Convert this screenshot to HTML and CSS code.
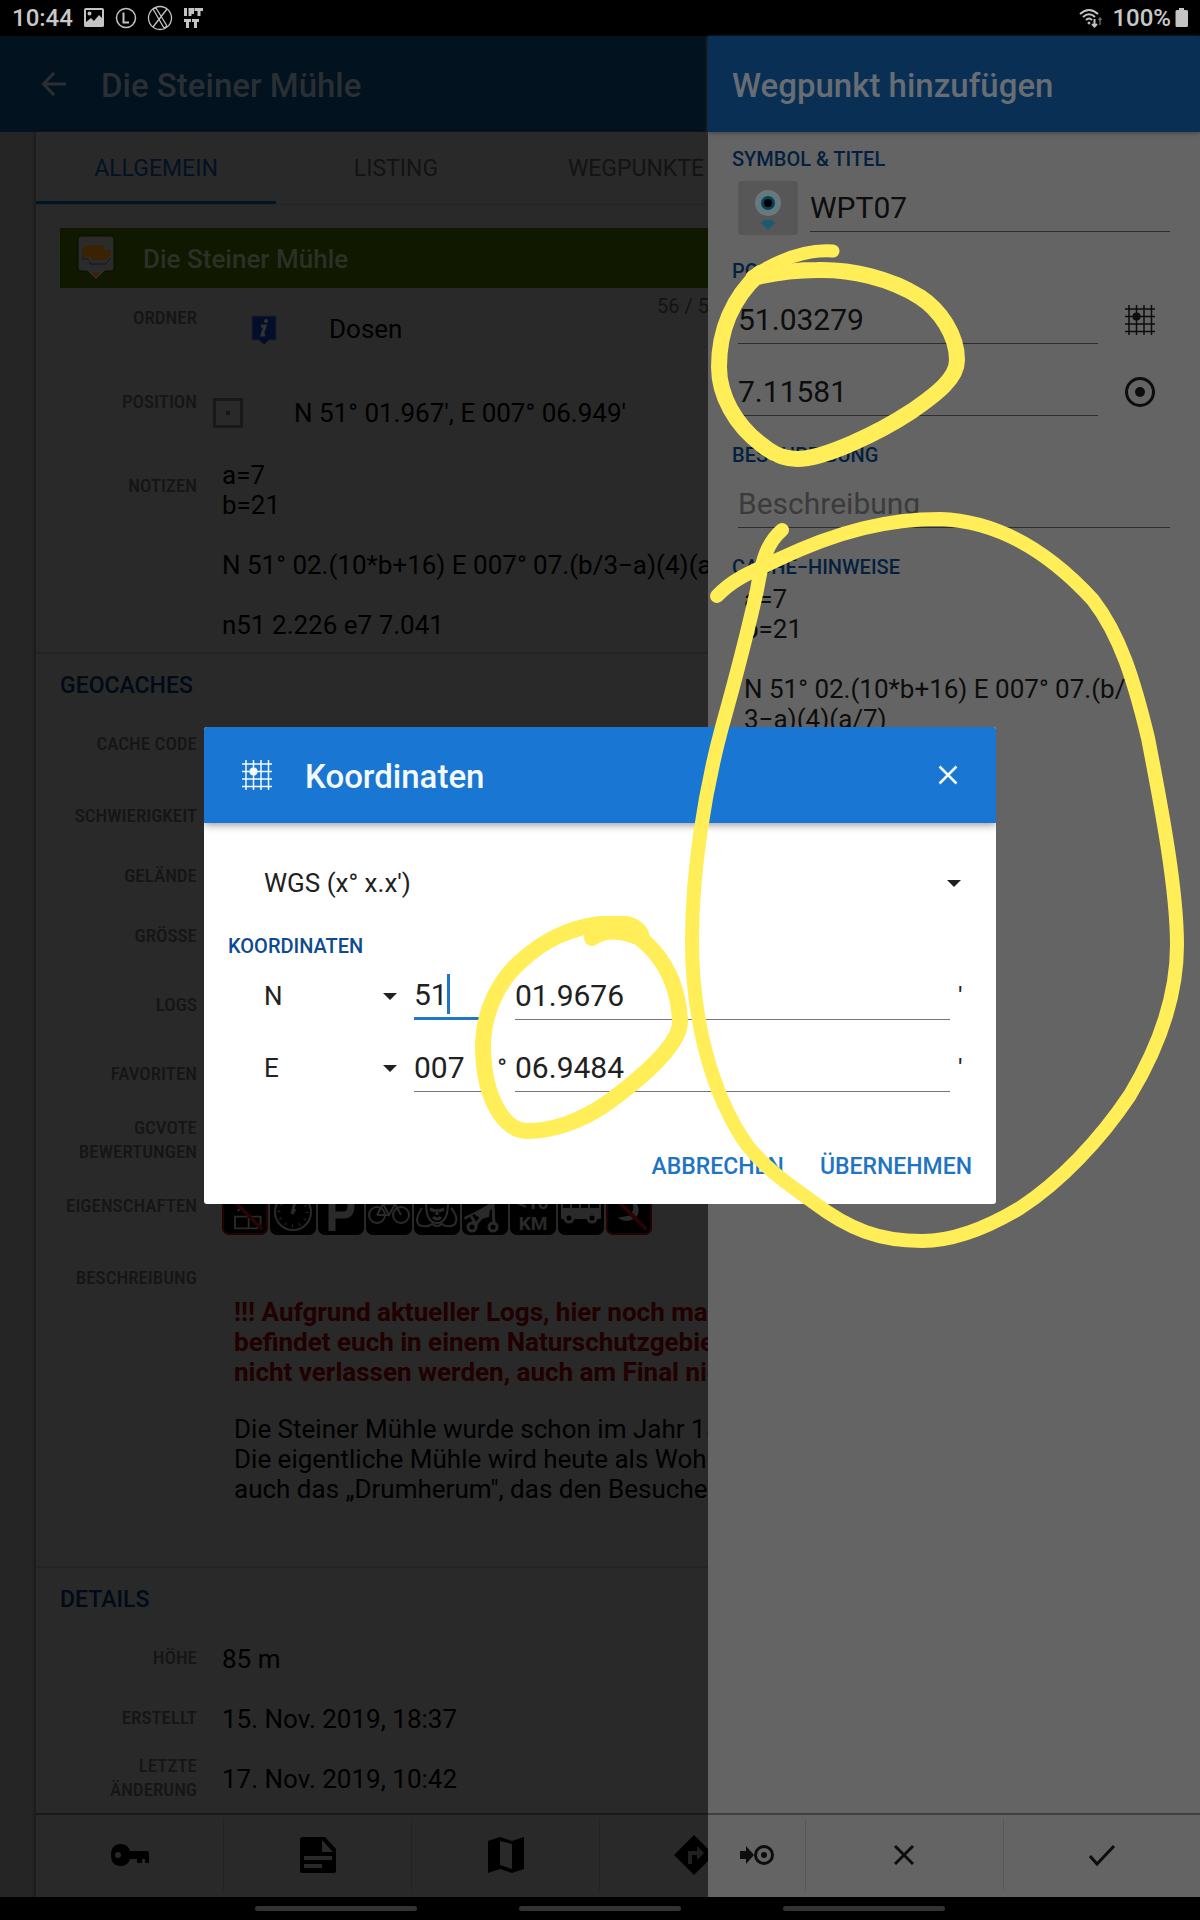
FILE: index.html
```html
<!DOCTYPE html>
<html lang="de">
<head>
<meta charset="utf-8">
<meta name="viewport" content="width=device-width, initial-scale=1">
<title>Die Steiner Mühle</title>
<link rel="stylesheet" href="styles.css">
</head>
<body>
<svg class="defs" aria-hidden="true">
  <symbol id="grid" viewBox="0 0 30 30">
    <path d="M4 0V30M11.500 0V30M19 0V30M26.500 0V30M0 4H30M0 11.500H30M0 19H30M0 26.500H30" fill="none" stroke="currentColor" stroke-width="1.500"/>
    <circle cx="11.500" cy="11.500" r="4" fill="currentColor"/>
  </symbol>
</svg>
<div class="app">
  <header class="status">
    <span class="clock">10:44</span>
    <svg width="22" height="22" viewBox="0 0 22 22"><path fill="#c4c4c4" fill-rule="evenodd" d="M3 1h16q2 0 2 2v16q0 1-2 1H3q-2 0-2-1V3q0-2 2-2zM3 3v12l5-4 3 3 5-6 3 3V3zM6.500 4.500a2 2 0 1 1 0 4 2 2 0 0 1 0-4z"/></svg>
    <svg width="22" height="22" viewBox="0 0 22 22" fill="none" stroke="#c4c4c4"><circle cx="11" cy="11" r="9.500" stroke-width="1.500"/><path d="M8.500 5.500V15.500H14" stroke-width="2"/></svg>
    <svg width="26" height="26" viewBox="0 0 26 26" fill="none" stroke="#c4c4c4" stroke-width="1.300"><circle cx="13" cy="13" r="11.500"/><path d="M6 4l11 19M9 3l11 18M6 4l3-1M17 23l3-2M20 4L6 22"/></svg>
    <svg width="20" height="22" viewBox="0 0 20 22" fill="none" stroke="#c4c4c4" stroke-width="3"><path d="M2.500 1v8M7 9V2.500h4.500M7 5.500h4M12 2.500h8M16 2v7M1 13.500h7M4.500 13v8M9 13.500h7M12.500 13v8"/></svg>
    <span class="spacer"></span>
    <svg width="26" height="24" viewBox="0 0 26 24" fill="none" stroke="#c4c4c4" stroke-width="2"><path d="M2 8q9-8 18 0M5 11q6-5.500 12 0M8 14q3-3 6 0"/><circle cx="11" cy="17" r="1" fill="#c4c4c4" stroke-width="1"/><path d="M16.500 13v7M14 18l2.500 2.500L19 18"/><path d="M22 19v-7M20.500 14l1.500-2 1.500 2" stroke="#666" stroke-width="1.500"/></svg>
    <span class="battery-text">100%</span>
    <svg width="14" height="20" viewBox="0 0 14 20"><path d="M4 0h5v2h2.500q1.500 0 1.500 1.500v14q0 1.500-1.500 1.500h-9.500q-1.500 0-1.500-1.500v-14q0-1.500 1.500-1.500h2z" fill="#c4c4c4"/></svg>
  </header>

  <div class="stage">
    <main class="cache">
      <div class="bar">
        <button class="plain" aria-label="Zurück"><svg width="26" height="26" viewBox="0 0 26 26" fill="none" stroke="currentColor" stroke-width="3"><path d="M25 13H3M13 2L2.500 13 13 24"/></svg></button>
        <h1>Die Steiner Mühle</h1>
      </div>
      <div class="sheet">
        <nav class="tabs"><a class="tab on" href="#allgemein">ALLGEMEIN</a><a class="tab" href="#listing">LISTING</a><a class="tab" href="#wegpunkte">WEGPUNKTE</a></nav>
        <section class="group" id="allgemein">
          <div class="banner">
            <svg width="42" height="48" viewBox="0 0 42 48"><path d="M4 1h30q3 0 3 3v29q0 3-3 3h-6l-9 9-9-9H4q-3 0-3-3V4q0-3 3-3z" fill="#2b2b2b" stroke="#0a0e00"/><path d="M5 13l6-3h17l-2 5h8l-1 6-4 4H17l-4-3-8-1z" fill="#3a2203"/><path d="M6 20v4h6M13 26v3h15l6-6" fill="none" stroke="#161616"/><path d="M15 37h8l-4 5z" fill="#3a2203"/></svg>
            <h2>Die Steiner Mühle</h2>
          </div>
          <span class="count">56 / 56</span>
          <dl class="rows general">
            <dt>ORDNER</dt>
            <dd class="folder"><svg width="30" height="34" viewBox="0 0 30 34"><path d="M3 2h24v24h-7l-5 5-5-5H3z" fill="#020e2a" stroke="#1f2022" stroke-width="1"/><circle cx="17" cy="7" r="2" fill="#333"/><path d="M12 12h4l-3 9h3" fill="none" stroke="#333" stroke-width="3"/></svg>Dosen</dd>
            <dt>POSITION</dt>
            <dd class="position"><svg width="30" height="30" viewBox="0 0 30 30"><path d="M1.500 1.500h27v27h-27z" fill="none" stroke="#191919" stroke-width="3"/><path d="M13 13h4v4h-4z" fill="#151515"/></svg>N 51° 01.967', E 007° 06.949'</dd>
            <dt>NOTIZEN</dt>
            <dd class="notes">a=7<br>b=21<br><br>N 51° 02.(10*b+16) E 007° 07.(b/3−a)(4)(a/7)<br><br>n51 2.226 e7 7.041</dd>
          </dl>
        </section>
        <section class="group">
          <h3>GEOCACHES</h3>
          <dl class="rows geo">
            <dt>CACHE CODE</dt><dd></dd>
            <dt>SCHWIERIGKEIT</dt><dd></dd>
            <dt>GELÄNDE</dt><dd></dd>
            <dt>GRÖSSE</dt><dd></dd>
            <dt>LOGS</dt><dd></dd>
            <dt>FAVORITEN</dt><dd></dd>
            <dt class="two">GCVOTE<br>BEWERTUNGEN</dt><dd></dd>
            <dt>EIGENSCHAFTEN</dt>
            <dd class="attrs">
              <svg class="no" viewBox="0 0 46 46"><path d="M12 28h28v8l-4 5H12zM27 28v12M15 22l3-3" fill="none" stroke="#2a2a2a" stroke-width="2"/><path d="M4 4l38 38" stroke="#2c0303" stroke-width="4"/></svg>
              <svg viewBox="0 0 46 46" fill="none" stroke="#2a2a2a"><circle cx="23" cy="23" r="18" stroke-width="2"/><circle cx="23" cy="23" r="14" stroke-width="3" stroke-dasharray="1 6.300"/><path d="M22 25l4-17M22 25l3-5" stroke-width="3"/></svg>
              <svg viewBox="0 0 46 46"><path d="M14 42V6h12q7 0 7 10t-7 10h-12" fill="none" stroke="#2a2a2a" stroke-width="7"/></svg>
              <svg viewBox="0 0 46 46" fill="none" stroke="#2a2a2a" stroke-width="2"><circle cx="11" cy="26" r="8"/><circle cx="35" cy="26" r="8"/><path d="M11 26l6-11h12l6 11M17 15l6 11 6-11M11 26h12"/></svg>
              <svg viewBox="0 0 46 46" fill="none" stroke="#2a2a2a" stroke-width="2"><path d="M8 19q-8 12-3 17 8 3 13-1 5 4 10 0 5 4 12 1 6-6-3-17M12 14q0 20 11 20t11-20"/><path d="M16 20l5 2M30 20l-5 2M19 28q4 4 8 0M23 20v6" stroke-width="3"/></svg>
              <svg viewBox="0 0 46 46" fill="none" stroke="#2a2a2a" stroke-width="3"><circle cx="10" cy="38" r="4"/><circle cx="31" cy="38" r="4"/><path d="M13 36l18-20 1 20M15 37L9 27"/><path d="M2 28l11-5 16-9-2 14-8 2-7-5-9 6z" fill="#2a2a2a" stroke="none"/></svg>
              <svg viewBox="0 0 46 46"><text x="23" y="20" class="km">&lt;10</text><text x="23" y="41" class="km">KM</text></svg>
              <svg viewBox="0 0 46 46" fill="none" stroke="#2a2a2a" stroke-width="2"><path d="M4 8h38v20H4zM4 20h38M13 8v12M22 8v12M31 8v12"/><path d="M4 20h38v9H4z" fill="#2a2a2a"/><circle cx="11" cy="29" r="4" fill="#000" stroke-width="3"/><circle cx="34" cy="29" r="4" fill="#000" stroke-width="3"/></svg>
              <svg class="no" viewBox="0 0 46 46"><path d="M24 8q8 12-1 19l-12 2q5 5 14 3 11-4 8-15-2-8-9-9z" fill="#2a2a2a"/><path d="M4 4l38 38" stroke="#2c0303" stroke-width="4"/></svg>
            </dd>
            <dt>BESCHREIBUNG</dt>
            <dd class="story">
              <p class="warn">!!! Aufgrund aktueller Logs, hier noch mal: ihr<br>befindet euch in einem Naturschutzgebiet. Wege<br>nicht verlassen werden, auch am Final nicht !!!</p>
              <p>Die Steiner Mühle wurde schon im Jahr 1500<br>Die eigentliche Mühle wird heute als Wohnhaus<br>auch das „Drumherum", das den Besucher</p>
            </dd>
          </dl>
        </section>
        <section class="group last">
          <h3>DETAILS</h3>
          <dl class="rows details">
            <dt>HÖHE</dt><dd>85 m</dd>
            <dt>ERSTELLT</dt><dd>15. Nov. 2019, 18:37</dd>
            <dt class="two">LETZTE<br>ÄNDERUNG</dt><dd>17. Nov. 2019, 10:42</dd>
          </dl>
        </section>
        <div class="tools">
          <button class="plain" aria-label="Code"><svg width="40" height="26" viewBox="0 0 40 26"><path fill="currentColor" fill-rule="evenodd" d="M11 2q7 0 9 7h17q2 0 2 2v10h-4v-4h-3v4h-5v-4h-7q-2 7-9 7Q1 24 1 13 1 2 11 2zm-3 8a3 3 0 1 0 0 6 3 3 0 0 0 0-6z"/></svg></button>
          <button class="plain" aria-label="Listing"><svg width="40" height="40" viewBox="0 0 40 40"><path fill="currentColor" fill-rule="evenodd" d="M5 2h22l11 12v22q0 2-3 2H5q-3 0-3-2V5q0-3 3-3zm19 3v12h11zM6 21v4h28v-4zm0 8v4h18v-4z"/></svg></button>
          <button class="plain" aria-label="Karte"><svg width="40" height="40" viewBox="0 0 40 40"><path fill="currentColor" fill-rule="evenodd" d="M2 6l12-4 12 4 12-4v32l-12 4-12-4-12 4zm12 0v24l12 4V9z"/></svg></button>
          <button class="plain" aria-label="Navigation"><svg width="42" height="42" viewBox="0 0 42 42"><path d="M21 1l20 20-20 20L1 21z" fill="currentColor"/><path d="M17 30V19h8" fill="none" stroke="#202020" stroke-width="4"/><path d="M24 12l7 7-7 7z" fill="#202020"/></svg></button>
        </div>
      </div>
    </main>

    <aside class="drawer">
      <div class="bar"><h1>Wegpunkt hinzufügen</h1></div>
      <form class="form">
        <label class="cap" for="title">SYMBOL &amp; TITEL</label>
        <div class="field title-field">
          <button type="button" class="symbol" aria-label="Symbol"><svg width="30" height="42" viewBox="0 0 30 42"><circle cx="15" cy="14" r="13" fill="#70777a"/><circle cx="15" cy="14" r="10" fill="#5b7d86"/><circle cx="15" cy="14" r="7" fill="#123e55"/><circle cx="15" cy="14" r="4" fill="#000"/><path d="M11 31h8l3 3-7 7-7-7z" fill="#1d5a72" stroke="#3b5a66"/></svg></button>
          <input id="title" type="text" value="WPT07">
        </div>
        <label class="cap" for="lat">POSITION</label>
        <div class="field"><input id="lat" type="text" value="51.03279"><button type="button" class="plain" aria-label="Koordinaten"><svg width="30" height="30"><use href="#grid"/></svg></button></div>
        <div class="field second"><input type="text" value="7.11581" aria-label="Länge"><button type="button" class="plain" aria-label="Aktuelle Position"><svg width="30" height="30" viewBox="0 0 30 30"><circle cx="15" cy="15" r="13.500" fill="none" stroke="currentColor" stroke-width="3"/><circle cx="15" cy="15" r="5" fill="currentColor"/></svg></button></div>
        <label class="cap" for="desc">BESCHREIBUNG</label>
        <div class="field"><input id="desc" type="text" placeholder="Beschreibung"></div>
        <span class="cap">CACHE−HINWEISE</span>
        <p class="hints">a=7<br>b=21<br><br>N 51° 02.(10*b+16) E 007° 07.(b/<wbr><span class="keep">3−a)(4)(a/7)</span><br><br>n51 2.226 e7 7.041</p>
      </form>
      <div class="actions">
        <button class="plain" aria-label="Zur Position"><svg width="36" height="24" viewBox="0 0 36 24"><path d="M1 8h6V3l8 9-8 9v-5H1z" fill="currentColor"/><circle cx="25" cy="12" r="8.500" fill="none" stroke="currentColor" stroke-width="3"/><circle cx="25" cy="12" r="3" fill="currentColor"/></svg></button>
        <button class="plain" aria-label="Abbrechen"><svg width="20" height="22" viewBox="0 0 20 22"><path d="M1 2l18 18M19 2L1 20" stroke="currentColor" stroke-width="3"/></svg></button>
        <button class="plain" aria-label="Speichern"><svg width="28" height="22" viewBox="0 0 28 22"><path d="M2 12l7 8L26 2" fill="none" stroke="currentColor" stroke-width="3"/></svg></button>
      </div>
    </aside>

    <div class="scrim">
      <section class="dialog" role="dialog" aria-label="Koordinaten">
        <div class="bar">
          <svg width="30" height="30"><use href="#grid"/></svg>
          <h1>Koordinaten</h1>
          <button class="plain" aria-label="Schließen"><svg width="20" height="20" viewBox="0 0 20 20"><path d="M1.500 1.500l17 17M18.500 1.500l-17 17" stroke="currentColor" stroke-width="2.500"/></svg></button>
        </div>
        <form class="coords">
          <div class="pick format"><select aria-label="Format"><option>WGS (x° x.x')</option></select></div>
          <span class="cap">KOORDINATEN</span>
          <div class="line">
            <div class="pick"><select aria-label="Breite"><option>N</option><option>S</option></select></div>
            <div class="deg active"><input type="text" value="51" aria-label="Grad Nord"><i class="caret"></i></div>
            <span class="unit">°</span>
            <input type="text" value="01.9676" aria-label="Minuten Nord">
            <span class="unit">'</span>
          </div>
          <div class="line">
            <div class="pick"><select aria-label="Länge"><option>E</option><option>W</option></select></div>
            <div class="deg"><input type="text" value="007" aria-label="Grad Ost"></div>
            <span class="unit">°</span>
            <input type="text" value="06.9484" aria-label="Minuten Ost">
            <span class="unit">'</span>
          </div>
          <div class="confirm"><button type="button" class="plain">ABBRECHEN</button><button type="button" class="plain">ÜBERNEHMEN</button></div>
        </form>
      </section>
    </div>
  </div>

  <footer class="gestures"><i></i><i></i><i></i></footer>

  <!-- freehand marker strokes -->
  <svg class="ink" viewBox="0 0 1200 1920" preserveAspectRatio="none" aria-hidden="true">
    <path stroke-width="13" d="M833 251C805 249 778 260 752 277"/>
    <path stroke-width="16" d="M760 273C733 297 719 330 719 367C719 395 735 425 762 445C774 455 784 459 797 459C825 459 880 432 912 411C938 393 957 378 957 360C957 335 940 310 920 297C890 278 850 269 817 270C795 270 770 274 757 277"/>
    <path stroke-width="14" d="M717 596C735 577 755 571 777 560C840 530 890 519 940 519C1000 521 1050 553 1093 600C1120 635 1134 680 1148 738C1162 810 1177 890 1177 945C1177 990 1163 1040 1130 1095C1100 1140 1060 1182 1020 1208C990 1226 955 1241 922 1241C880 1241 850 1230 813 1202C785 1182 765 1168 747 1145C710 1092 692 1016 692 941C692 870 705 790 722 727C738 670 748 630 757 590C762 560 767 543 782 530"/>
    <path stroke-width="16" d="M600 924C640 924 678 965 680 1022C680 1045 640 1079 610 1101C580 1123 550 1131 527 1131C505 1131 484 1100 483 1048C483 1010 500 980 520 962C545 939 570 928 600 924H627M592 938C606 929 620 930 640 938C645 934 634 925 626 924"/>
  </svg>
</div>
</body>
</html>
```
FILE: styles.css
```css
* { box-sizing: border-box; }
body { margin: 0; background: #000; font-family: Roboto, "Liberation Sans", sans-serif; }
h1, h2, h3, p, dl, dd { margin: 0; font-weight: 500; }
svg { display: block; flex: none; }
.defs { width: 0; height: 0; position: absolute; }
.plain { border: 0; background: none; padding: 0; color: inherit; font: inherit; display: flex; align-items: center; justify-content: center; }
.app { position: relative; min-height: 100vh; display: flex; flex-direction: column; }

.status { height: 36px; display: flex; align-items: center; gap: 10px; padding: 0 11px 0 12px; color: #c8c8c8; font-size: 24px; line-height: 36px; font-weight: 500; }
.battery-text { margin: 0 -6px 0 -2px; }
.spacer { flex: 1; }

.stage { position: relative; flex: 1; display: flex; }
.bar { height: 96px; display: flex; align-items: center; flex: none; }
.bar h1 { font-size: 33px; line-height: 40px; padding-top: 3px; white-space: nowrap; }

.cache { flex: 59; min-width: 0; display: flex; flex-direction: column; overflow: hidden; background: #252525; color: #000; }
.cache .bar { background: #02121f; color: #292f34; padding-left: 41px; gap: 34px; }
.sheet { flex: 1; margin-left: 35px; border-left: 1px solid #1d1d1d; box-shadow: -1px 0 2px #191919; background: #292929; display: flex; flex-direction: column; }
.tabs { display: flex; border-bottom: 1px solid #242424; }
.tab { flex: none; width: 240px; height: 72px; padding-top: 4px; display: flex; align-items: center; justify-content: center; color: #131313; font-size: 23px; text-decoration: none; border-bottom: 3px solid transparent; }
.tab.on { color: #021223; border-color: #021427; }
.group { position: relative; border-bottom: 2px solid #242424; }
.group.last { flex: 1; border: 0; }
.banner { margin: 23px 0 0 24px; height: 60px; padding: 2px 0 0 17px; background: #101800; display: flex; align-items: center; gap: 24px; color: #2c3026; }
.banner h2 { font-size: 26px; line-height: 30px; white-space: nowrap; }
.count { position: absolute; left: 621px; top: 89px; font-size: 20px; line-height: 24px; color: #131313; white-space: nowrap; }
.rows { display: grid; grid-template-columns: 161px 1fr; column-gap: 25px; font-size: 26px; line-height: 30px; white-space: nowrap; }
.rows dt { padding-top: 18px; text-align: right; font-family: "Roboto Condensed", "Liberation Sans Narrow", Roboto, sans-serif; font-size: 19px; line-height: 24px; color: #151515; }
.rows .two { padding-top: 12px; }
.rows dd, .rows p { font-weight: 400; min-width: 0; }
.general { grid-template-rows: 84px 84px auto; }
.folder { display: flex; align-items: start; padding: 26px 0 0 27px; gap: 50px; }
.position { display: flex; align-items: start; padding-top: 26px; gap: 51px; margin-left: -9px; }
.notes { padding: 4px 0 12px; }
.group h3 { padding: 17px 24px 13px; font-size: 23px; line-height: 30px; color: #010b17; }
.geo { grid-template-rows: 72px 60px 60px 69px 69px 60px 72px 72px auto; }
.attrs { display: flex; gap: 2px; padding-top: 13px; }
.attrs svg { width: 46px; height: 46px; background: #000; border-radius: 7px; }
.attrs .no { border: 2px solid #200202; }
.km { fill: #2a2a2a; font-size: 19px; font-weight: 700; text-anchor: middle; }
.story { padding: 49px 0 62px 12px; }
.rows .warn { margin-bottom: 27px; font-weight: 700; color: #200000; }
.details { grid-template-rows: 60px 60px 60px; }
.details dd { padding-top: 16px; }
.details .two { padding-top: 6px; }
.tools, .actions { display: flex; height: 84px; border-top: 2px solid #191919; padding: 4px 0 6px; }
.tools button { width: 188px; flex: none; border-right: 1px solid #232323; }

.drawer { flex: 41; min-width: 0; background: #646464; color: #0d0d0d; display: flex; flex-direction: column; }
.drawer .bar { background: #0a2f54; color: #676d73; padding-left: 24px; box-shadow: 0 1px 4px #444; }
.form { flex: 1; padding: 15px 24px; }
.cap { display: block; font-size: 20px; line-height: 24px; font-weight: 500; color: #051f3e; }
.field { display: flex; align-items: center; height: 60px; margin: 7px 6px 21px; gap: 27px; }
.field + .second { margin-top: -9px; }
.field .plain { width: 30px; margin-right: 15px; }
.title-field { gap: 12px; }
input { flex: 1; min-width: 0; width: 100%; height: 48px; border: 0; border-bottom: 1px solid #2e2e2e; border-radius: 0; outline: 0; padding: 0; background: none; color: inherit; font: 400 30px Roboto, "Liberation Sans", sans-serif; }
input::placeholder { color: #3b3b3b; opacity: 1; }
.symbol { width: 60px; height: 54px; border: 0; border-radius: 3px; background: #575757; padding: 4px 0 0; display: flex; justify-content: center; align-items: center; }
.hints { padding: 5px 30px 5px 12px; font-size: 26px; line-height: 30px; font-weight: 400; }
.keep { white-space: nowrap; }
.actions { border-color: #404040; }
.actions button { flex: 1; border-right: 1px solid #575757; }
.actions button:first-child { flex: 0 0 98px; }
.actions button:last-child { border: 0; }

.scrim { position: absolute; inset: 0; display: flex; align-items: center; justify-content: center; padding-bottom: 2px; }
.dialog { width: 66%; background: #fff; color: #212121; border-radius: 3px; overflow: hidden; }
.dialog .bar { background: #1976d2; color: #f4f9fd; padding: 0 38px; gap: 33px; box-shadow: 0 2px 8px rgba(0, 0, 0, .4); }
.dialog .bar h1 { flex: 1; }
.coords { padding: 30px 24px 14px; }
.coords .cap { color: #0d4a8f; margin: 21px 0 2px; }
.pick { position: relative; }
.pick::after { content: ""; position: absolute; right: 0; top: 50%; margin-top: -3px; border: 7px solid transparent; border-top-color: #212121; border-bottom: 0; pointer-events: none; }
select { appearance: none; width: 100%; height: 60px; border: 0; background: none; padding: 0; color: inherit; font: 400 26px Roboto, "Liberation Sans", sans-serif; }
.format { margin: 0 11px 0 36px; }
.line { display: grid; grid-template-columns: 133px 72px 22px 435px 4px; align-items: center; height: 72px; margin-left: 36px; column-gap: 8px; }
.line input { border-color: #757575; }
.deg { margin-left: 9px; margin-right: -9px; position: relative; }
.deg input { display: block; }
.active input { border-bottom: 3px solid #2076c8; }
.caret { position: absolute; left: 33px; top: 2px; width: 3px; height: 40px; background: #2076c8; }
.unit { font-size: 26px; text-align: right; }
.confirm { display: flex; justify-content: flex-end; gap: 36px; height: 48px; margin-top: 38px; color: #1f74c4; font-size: 23px; font-weight: 500; }

.gestures { height: 23px; display: flex; align-items: center; justify-content: center; gap: 102px; background: #000; }
.gestures i { width: 162px; height: 5px; border-radius: 3px; background: #333; }
.ink { position: absolute; inset: 0; width: 100%; height: 100%; pointer-events: none; fill: none; stroke: #ffee58; stroke-linecap: round; stroke-linejoin: round; }
```
